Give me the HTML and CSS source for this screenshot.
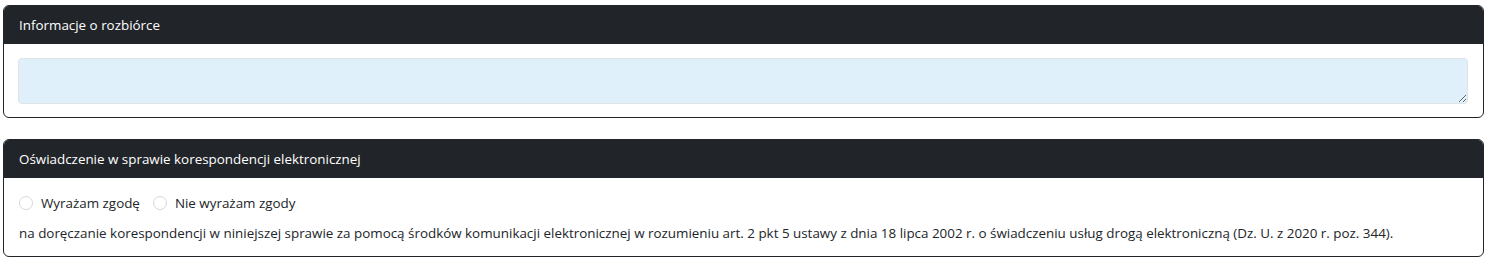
FILE: index.html
```html
<!DOCTYPE html>
<html lang="pl">
<head>
<meta charset="utf-8">
<link rel="stylesheet" href="styles.css">
</head>
<body>
<div class="page">
  <section class="card">
    <div class="card-header">Informacje o rozbiórce</div>
    <div class="card-body">
      <textarea class="textarea"></textarea>
    </div>
  </section>
  <section class="card">
    <div class="card-header">Oświadczenie w sprawie korespondencji elektronicznej</div>
    <div class="card-body body2">
      <div class="radios">
        <label class="radio"><span class="circle"></span>Wyrażam zgodę</label>
        <label class="radio"><span class="circle"></span>Nie wyrażam zgody</label>
      </div>
      <p class="note">na doręczanie korespondencji w niniejszej sprawie za pomocą środków komunikacji elektronicznej w rozumieniu art. 2 pkt 5 ustawy z dnia 18 lipca 2002 r. o świadczeniu usług drogą elektroniczną (Dz. U. z 2020 r. poz. 344).</p>
    </div>
  </section>
</div>
</body>
</html>
```
FILE: styles.css
```css
* { box-sizing: border-box; }
html, body { margin: 0; padding: 0; background: #fff; }
body {
  font-family: "Open Sans", "Noto Sans", sans-serif;
  font-size: 13.4px;
  color: #212529;
}
.page {
  padding: 5px 5px 0 3px;
  display: flex;
  flex-direction: column;
  gap: 21px;
}
.card {
  border: 1px solid #212529;
  border-radius: 6px;
  overflow: hidden;
}
.card-header {
  background: #212529;
  color: #fff;
  height: 38px;
  padding: 2px 15px 0 15px;
  display: flex;
  align-items: center;
  line-height: 1;
}
.card-body {
  padding: 14px 15px 13px 14px;
}
.textarea {
  display: block;
  width: 100%;
  height: 46px;
  background: #e0f0fb;
  border: 1px solid #dfe3e7;
  border-radius: 4px;
  margin: 0;
  resize: vertical;
  font: inherit;
}
.body2 { padding: 16px 15px 0 15px; height: 78px; }
.radios { display: flex; gap: 13px; height: 18px; align-items: center; }
.radio { display: flex; align-items: center; gap: 8px; }
.circle {
  width: 14px; height: 14px;
  border: 1px solid #d6d9dc;
  border-radius: 50%;
  background: #fff;
}
.note { margin: 12px 0 0 0; line-height: 18px; }
```
